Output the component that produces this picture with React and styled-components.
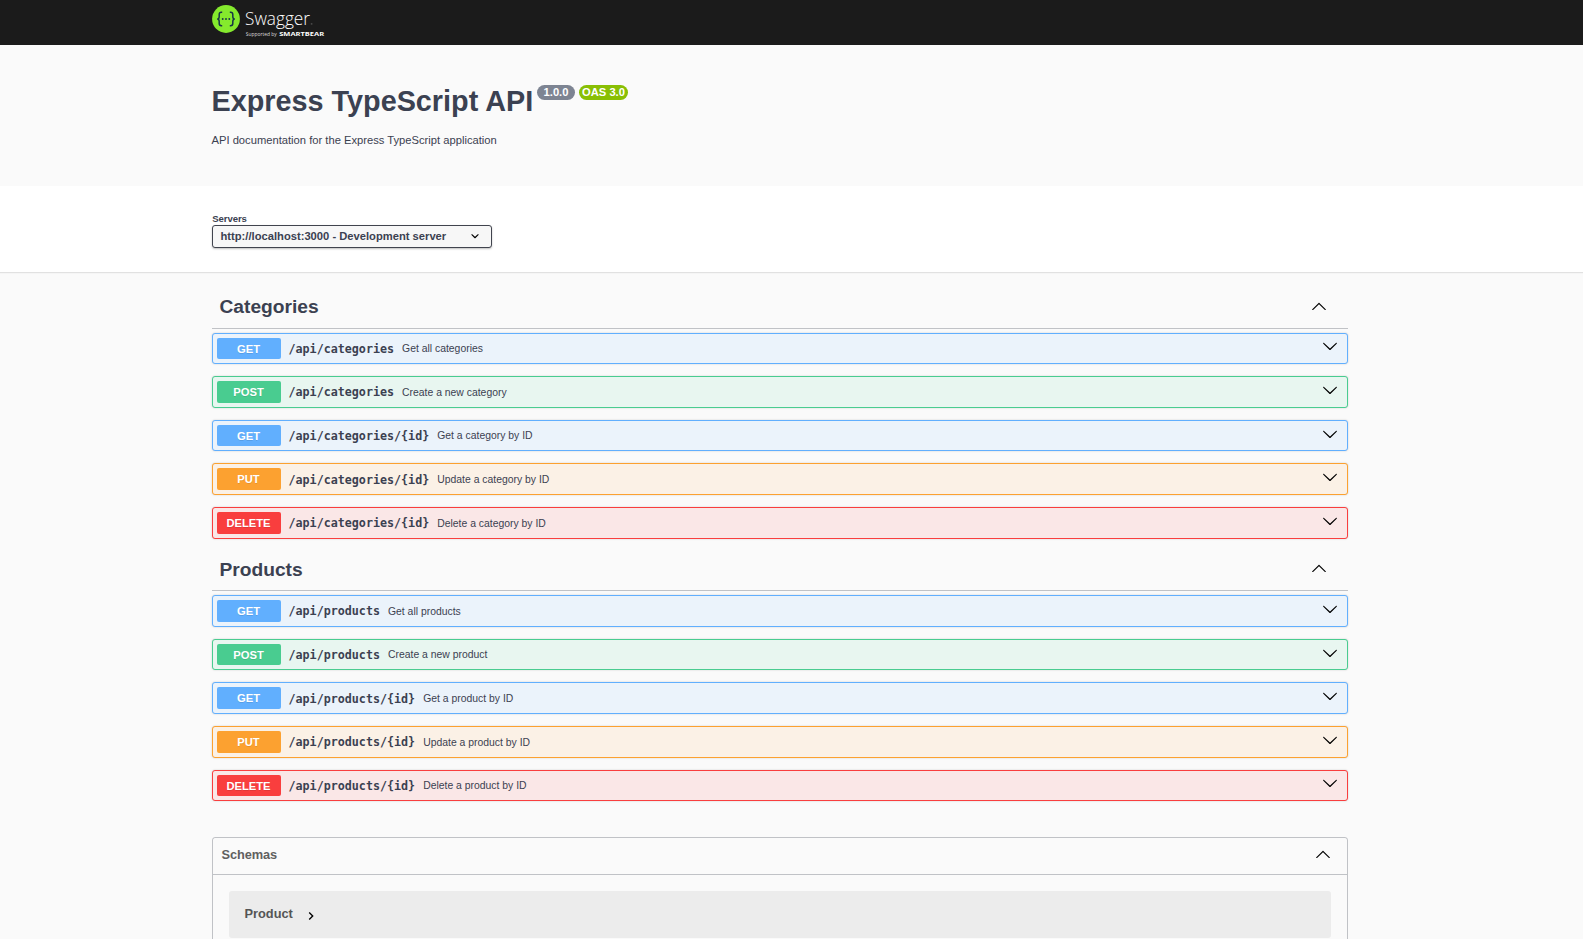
import React from "react";
import styled, { createGlobalStyle } from "styled-components";

const GlobalStyle = createGlobalStyle`
  * { box-sizing: border-box; }
  html, body { margin: 0; height: 100%; overflow: hidden; }
  body {
    background: #fafafa;
    color: #3b4151;
    font-family: "Liberation Sans", Arial, sans-serif;
  }
`;

const METHOD_COLORS = {
  GET: ["#61affe", "#ebf3fb"],
  POST: ["#49cc90", "#e8f6f0"],
  PUT: ["#fca130", "#fbf1e6"],
  DELETE: ["#f93e3e", "#fae7e7"],
};

const Page = styled.div`
  height: 939px;
  overflow: hidden;
`;

const Band = styled.div`
  padding-right: 24px;
`;

const Wrapper = styled.div`
  width: 1136px;
  margin: 0 auto;
`;

const Topbar = styled(Band)`
  height: 45px;
  background: #1b1b1b;
`;

const Logo = styled.svg`
  display: block;
  width: 120px;
  height: 45px;
`;

const Info = styled(Band)`
  height: 141px;
  padding-top: 39px;
`;

const Title = styled.h1`
  display: flex;
  align-items: flex-start;
  margin: 0;
  height: 34px;
  font-size: 28.8px;
  line-height: 34px;
  white-space: nowrap;
`;

const TitleText = styled.span`
  width: 325.5px;
`;

const Version = styled.small`
  height: 15px;
  width: ${(p) => p.$width}px;
  margin: 1px 4px 0 0;
  border-radius: 8px;
  background: ${(p) => p.$color};
  color: #fff;
  font-size: 11.2px;
  line-height: 15px;
  text-align: center;
`;

const Description = styled.p`
  margin: 16px 0 0;
  font-size: 11.2px;
  line-height: 13px;
`;

const Servers = styled(Band)`
  height: 86px;
  padding-top: 27px;
  background: #fff;
  box-shadow: 0 1px 0 #e1e1e1, 0 2px 0 #f5f5f5;
`;

const ServersLabel = styled.div`
  height: 12px;
  padding-left: 0.8px;
  font-size: 9.6px;
  font-weight: 700;
  line-height: 11px;
  letter-spacing: -0.1px;
`;

const Select = styled.div`
  display: flex;
  align-items: center;
  justify-content: space-between;
  width: 280px;
  height: 23px;
  padding: 0 8px;
  border: 1px solid #41444e;
  border-radius: 3px;
  background: #f7f7f7;
  box-shadow: 0 1px 2px rgba(0, 0, 0, 0.25);
  font-size: 11.2px;
  font-weight: 700;
  line-height: 12px;
`;

const SelectValue = styled.span`
  padding-bottom: 2px;
`;

const Section = styled.section``;

const Operations = styled(Band)`
  padding-top: 16px;
`;

const SectionTitle = styled.h3`
  display: flex;
  align-items: center;
  justify-content: space-between;
  height: 40.6px;
  margin: 0 0 4px;
  padding: 0 20.5px 1px 8px;
  border-bottom: 1px solid rgba(59, 65, 81, 0.3);
  font-size: 19.2px;
`;

const Operation = styled.div`
  display: flex;
  align-items: center;
  height: 31.6px;
  margin-bottom: 12px;
  padding: 4px 8.5px 4px 4px;
  border: 1px solid ${(p) => METHOD_COLORS[p.$method][0]};
  border-radius: 3px;
  background: ${(p) => METHOD_COLORS[p.$method][1]};
  box-shadow: 0 0 2px rgba(0, 0, 0, 0.19);
`;

const Method = styled.span`
  width: 64px;
  height: 21.6px;
  border-radius: 2px;
  background: ${(p) => METHOD_COLORS[p.$method][0]};
  color: #fff;
  font-size: 11.2px;
  font-weight: 700;
  line-height: 22.4px;
  text-align: center;
  text-shadow: 0 1px 0 rgba(0, 0, 0, 0.1);
`;

const Path = styled.span`
  padding: 1px 8px 0;
  font-family: "DejaVu Sans Mono", monospace;
  font-size: 11.69px;
  font-weight: 700;
`;

const Summary = styled.span`
  flex: 1;
  padding-top: 0.6px;
  font-size: 10.4px;
`;

const Icon = styled.svg`
  display: block;
  width: 16px;
  height: 16px;
  margin-top: ${(p) => p.$shift || 0}px;
`;

const Schemas = styled.section`
  height: 140px;
  margin-top: 36px;
  border: 1px solid rgba(59, 65, 81, 0.3);
  border-radius: 3px;
`;

const SchemasTitle = styled.h4`
  display: flex;
  align-items: center;
  justify-content: space-between;
  height: 37px;
  margin: 0 0 16px;
  padding: 0 15.5px 3px 9px;
  border-bottom: 1px solid rgba(59, 65, 81, 0.3);
  color: #606060;
  font-size: 12.8px;
  letter-spacing: -0.1px;
`;

const Model = styled.div`
  display: flex;
  align-items: center;
  height: 47px;
  margin: 0 16px;
  padding: 0 16px;
  border-radius: 3px;
  background: #ececec;
  color: #555;
  font-size: 12.8px;
  font-weight: 700;
`;

const ModelName = styled.span`
  width: 58px;
  padding-bottom: 2px;
`;

const Down = () => (
  <Icon viewBox="0 0 20 20" $shift={-4}>
    <path d="M17.418 6.109c.272-.268.709-.268.979 0s.271.701 0 .969l-7.908 7.83c-.27.268-.707.268-.979 0l-7.908-7.83c-.27-.268-.27-.701 0-.969.271-.268.709-.268.979 0L10 13.25l7.418-7.141z" />
  </Icon>
);

const Up = ({ shift }) => (
  <Icon viewBox="0 0 20 20" $shift={shift}>
    <path d="M17.418 14.908c.272.268.709.268.979 0s.271-.701 0-.969l-7.908-7.83c-.27-.268-.707-.268-.979 0l-7.908 7.83c-.27.268-.27.701 0 .969.271.268.709.268.979 0L10 7.767l7.418 7.141z" />
  </Icon>
);

const operationsFor = (plural, singular) => [
  ["GET", `/api/${plural}`, `Get all ${plural}`],
  ["POST", `/api/${plural}`, `Create a new ${singular}`],
  ["GET", `/api/${plural}/{id}`, `Get a ${singular} by ID`],
  ["PUT", `/api/${plural}/{id}`, `Update a ${singular} by ID`],
  ["DELETE", `/api/${plural}/{id}`, `Delete a ${singular} by ID`],
];

const SECTIONS = [
  { name: "Categories", operations: operationsFor("categories", "category") },
  { name: "Products", operations: operationsFor("products", "product") },
];

const SwaggerLogo = () => (
  <Logo viewBox="0 0 120 45">
    <circle cx="14" cy="19" r="13.9" fill="#85ea2d" />
    <g fill="none" stroke="#173647" strokeWidth="1.5">
      <path d="M10.2 12.2h-.8c-1.6 0-2.2.8-2.2 2.2v2c0 1.6-.6 2.6-2 2.6 1.4 0 2 1 2 2.6v2c0 1.4.6 2.2 2.2 2.2h.8" />
      <path d="M17.8 12.2h.8c1.6 0 2.2.8 2.2 2.2v2c0 1.6.6 2.6 2 2.6-1.4 0-2 1-2 2.6v2c0 1.4-.6 2.2-2.2 2.2h-.8" />
    </g>
    <g fill="#173647">
      <circle cx="10.7" cy="19" r="0.95" />
      <circle cx="14" cy="19" r="0.95" />
      <circle cx="17.3" cy="19" r="0.95" />
    </g>
    <text x="33" y="25" fill="#fff" fontFamily="Open Sans, sans-serif" fontWeight="300" fontSize="17.8" textLength="65" lengthAdjust="spacingAndGlyphs">Swagger</text>
    <rect x="98.8" y="23.6" width="1.6" height="0.7" fill="#888" />
    <text x="33.8" y="35.5" fill="#ddd" fontFamily="Open Sans, sans-serif" fontSize="5.2" textLength="31" lengthAdjust="spacingAndGlyphs">Supported by</text>
    <text x="67.2" y="35.6" fill="#fff" fontFamily="Open Sans, sans-serif" fontWeight="700" fontSize="5.9" textLength="45" lengthAdjust="spacingAndGlyphs">SMARTBEAR</text>
  </Logo>
);

export default function App() {
  return (
    <Page>
      <GlobalStyle />
      <Topbar>
        <Wrapper>
          <SwaggerLogo />
        </Wrapper>
      </Topbar>
      <Info>
        <Wrapper>
          <Title>
            <TitleText>Express TypeScript API</TitleText>
            <Version $color="#7d8492" $width={38}>1.0.0</Version>
            <Version $color="#89bf04" $width={49}>OAS 3.0</Version>
          </Title>
          <Description>API documentation for the Express TypeScript application</Description>
        </Wrapper>
      </Info>
      <Servers>
        <Wrapper>
          <ServersLabel>Servers</ServersLabel>
          <Select>
            <SelectValue>http://localhost:3000 - Development server</SelectValue>
            <Icon viewBox="0 0 20 20" $shift={-1}>
              <path d="M13.418 7.859c.271-.268.709-.268.978 0 .27.268.272.701 0 .969l-3.908 3.83c-.27.268-.707.268-.979 0l-3.908-3.83c-.27-.267-.27-.701 0-.969.271-.268.709-.268.978 0L10 11l3.418-3.141z" />
            </Icon>
          </Select>
        </Wrapper>
      </Servers>
      <Operations>
        <Wrapper>
          {SECTIONS.map(({ name, operations }) => (
            <Section key={name}>
              <SectionTitle>
                {name}
                <Up shift={-3} />
              </SectionTitle>
              {operations.map(([method, path, summary]) => (
                <Operation key={method + path} $method={method}>
                  <Method $method={method}>{method}</Method>
                  <Path>{path}</Path>
                  <Summary>{summary}</Summary>
                  <Down />
                </Operation>
              ))}
            </Section>
          ))}
          <Schemas>
            <SchemasTitle>
              Schemas
              <Up shift={-0.5} />
            </SchemasTitle>
            <Model>
              <ModelName>Product</ModelName>
              <Icon viewBox="0 0 24 24" $shift={3}>
                <path d="M10 6L8.59 7.41 13.17 12l-4.58 4.59L10 18l6-6z" />
              </Icon>
            </Model>
          </Schemas>
        </Wrapper>
      </Operations>
    </Page>
  );
}
